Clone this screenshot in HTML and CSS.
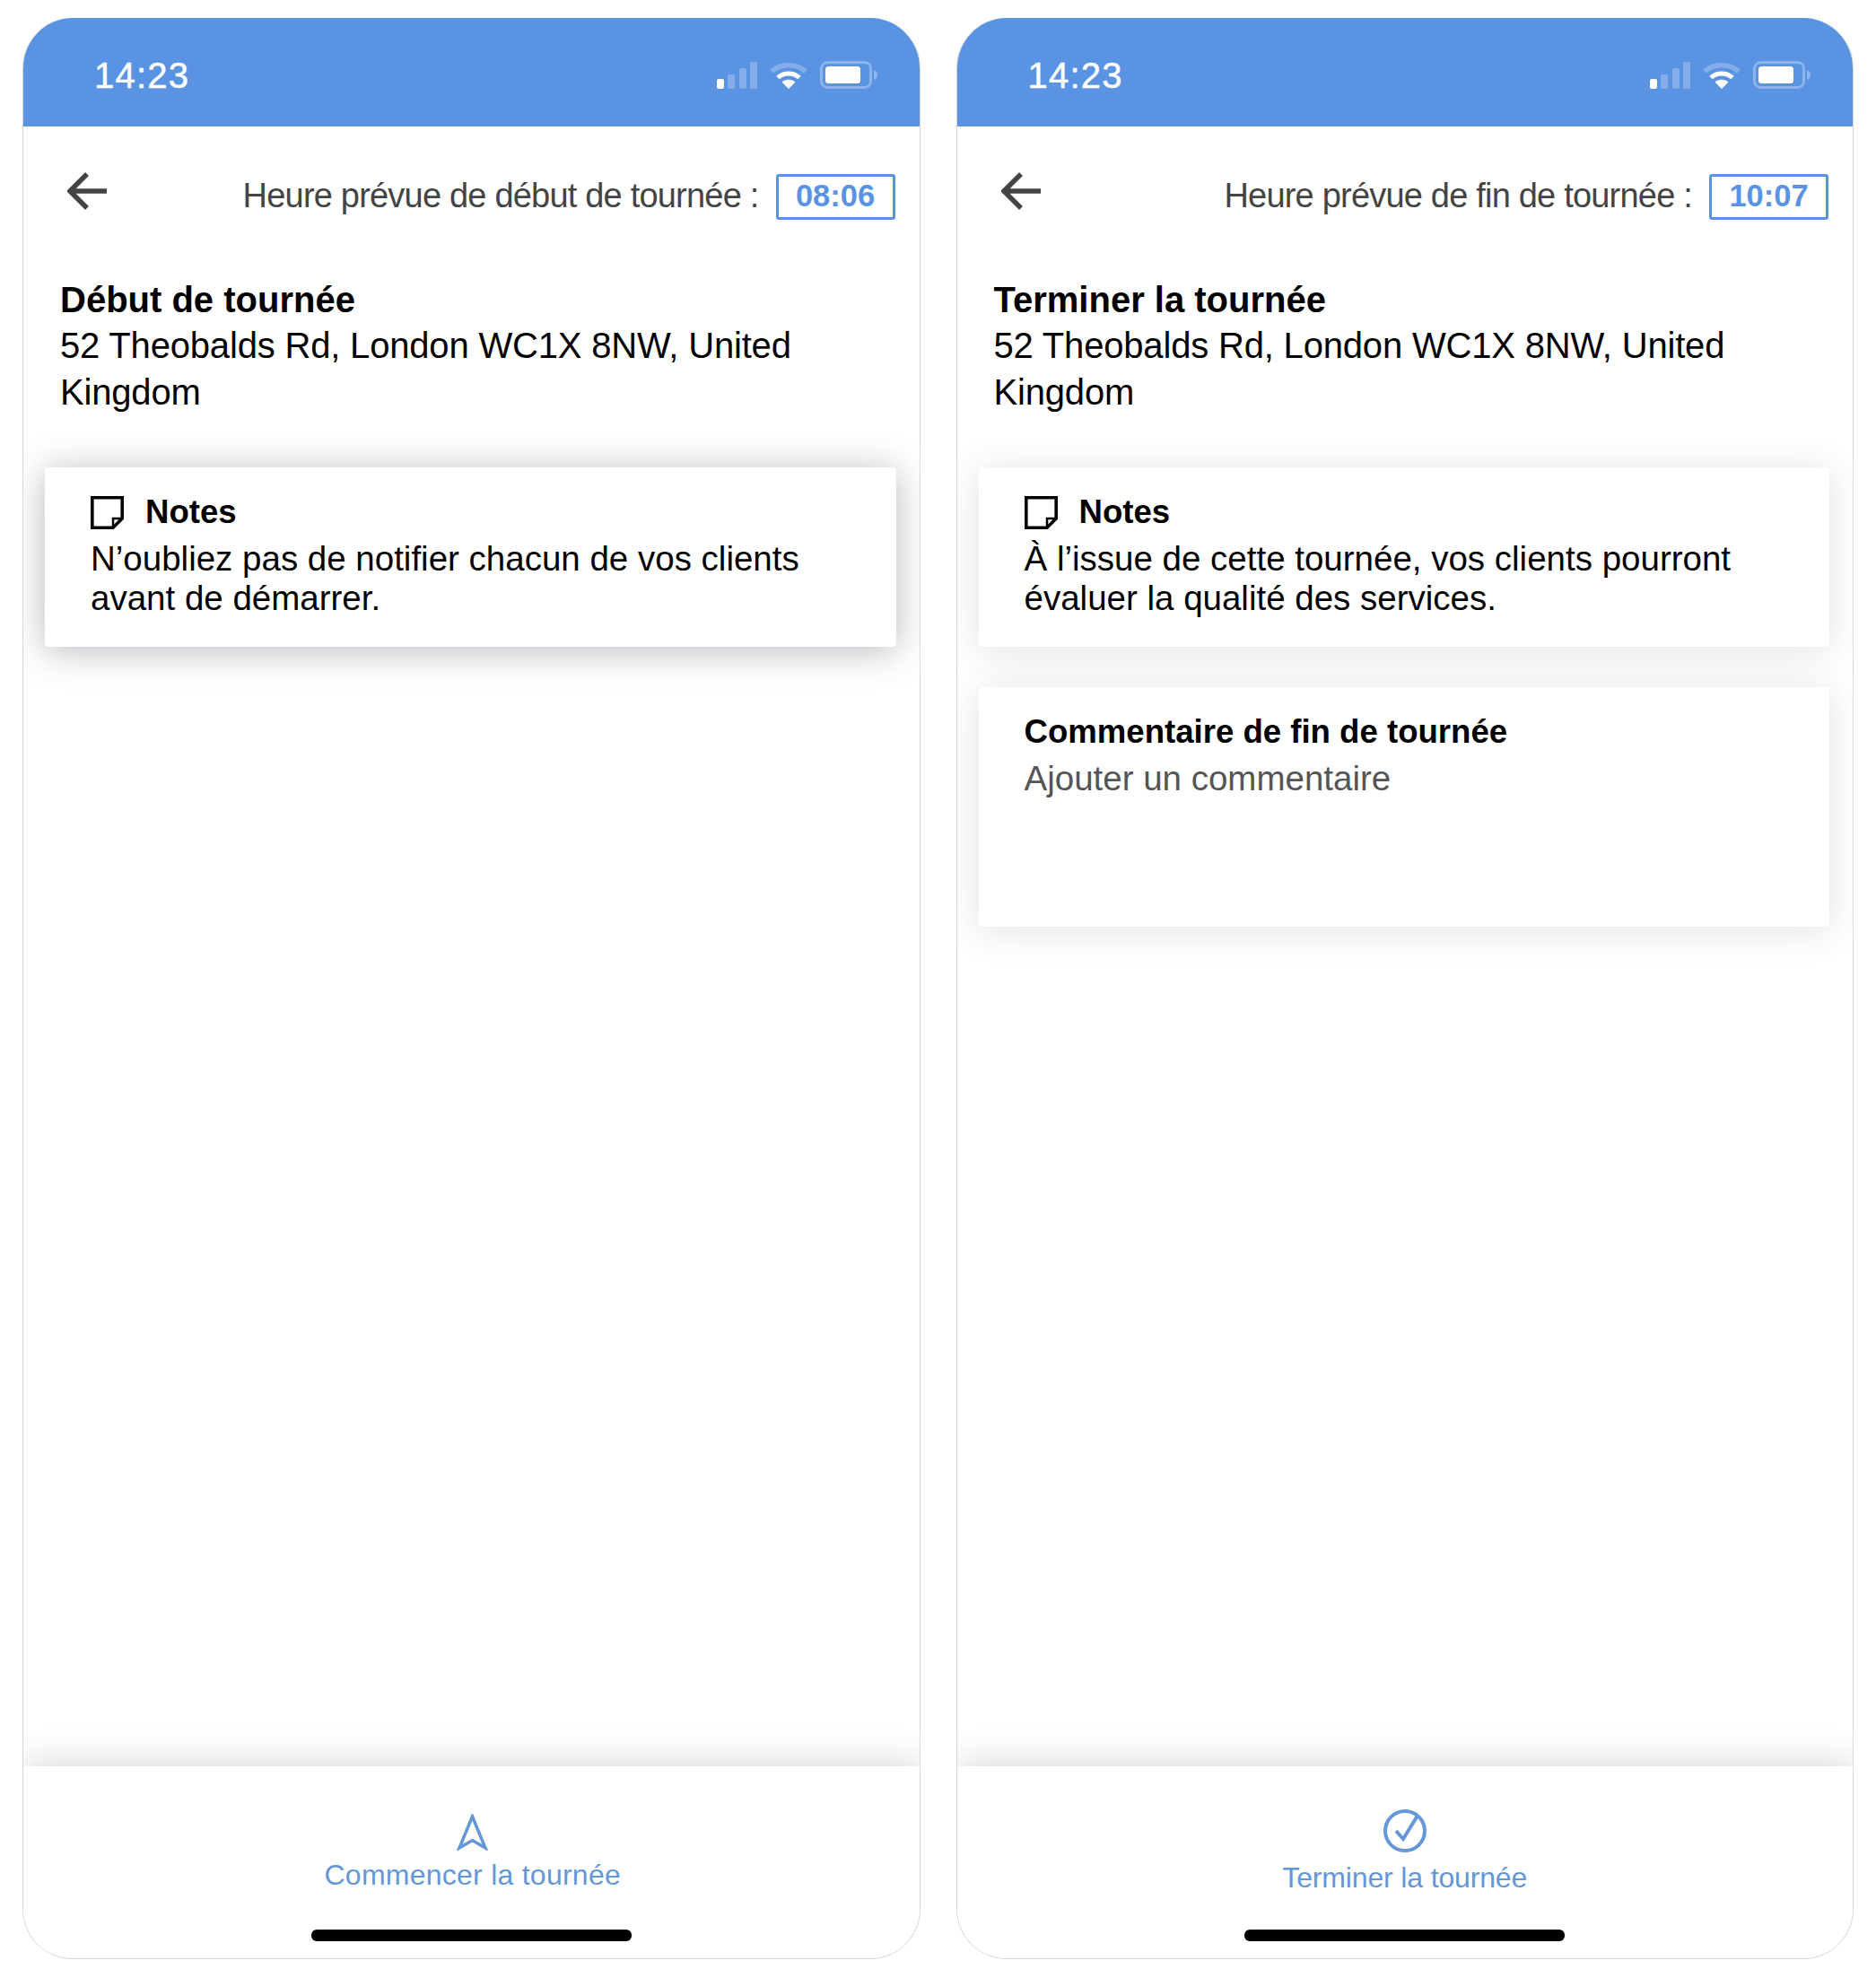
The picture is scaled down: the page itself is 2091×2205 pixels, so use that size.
FILE: index.html
```html
<!DOCTYPE html>
<html lang="fr">
<head>
    <meta charset="UTF-8">
    <title>Tournée</title>
    <link rel="stylesheet" href="styles.css">
</head>
<body>

<div class="screens">

    <!-- debut de tournee -->
    <div class="phone">
        <div class="status-bar">
            <span class="clock">14:23</span>
            <div class="status-icons">
                <svg class="signal" width="45" height="30" viewBox="0 0 45 30"><rect x="0" y="19" width="8" height="11" rx="2" fill="#fff"/><rect x="12" y="14" width="8" height="16" rx="2" fill="#fff" opacity=".25"/><rect x="25" y="7" width="8" height="23" rx="2" fill="#fff" opacity=".25"/><rect x="37" y="0" width="8" height="30" rx="2" fill="#fff" opacity=".25"/></svg>
                <svg class="wifi" width="42" height="30" viewBox="0 0 42 30"><path d="M2 10.5C12.500 1.500 29.500 1.500 40 10.500" fill="none" stroke="#fff" stroke-opacity=".25" stroke-width="5.500"/><path d="M9 17.500C15.500 11.500 26.500 11.500 33 17.500" fill="none" stroke="#fff" stroke-width="5"/><path d="M21 30L13.500 22.500C17.500 18.800 24.500 18.800 28.500 22.500Z" fill="#fff"/></svg>
                <svg class="battery" width="65" height="31" viewBox="0 0 65 31"><rect x="1.500" y="1.500" width="55" height="28" rx="7" fill="none" stroke="#fff" stroke-opacity=".3" stroke-width="3"/><rect x="6" y="6" width="39" height="19" rx="3.500" fill="#fff"/><path d="M60 10C63 11 64 13 64 15.500C64 18 63 20 60 21Z" fill="#fff" opacity=".3"/></svg>
            </div>
        </div>

        <div class="top-row">
            <svg class="back" width="44" height="42" viewBox="0 0 44 42"><path d="M44 21H4M22 2L3 21L22 40" fill="none" stroke="#444" stroke-width="5.500"/></svg>
            <span class="planned">Heure prévue de début de tournée :</span>
            <span class="time-box">08:06</span>
        </div>

        <div class="place">
            <h2>Début de tournée</h2>
            <p>52 Theobalds Rd, London WC1X 8NW, United Kingdom</p>
        </div>

        <div class="card card-strong">
            <div class="card-title">
                <svg class="note-icon" width="37" height="37" viewBox="0 0 37 37"><path d="M1.800 1.800H35.200V25L25 35.200H1.800Z" fill="none" stroke="#000" stroke-width="3.600"/><path d="M35 25H25V35" fill="none" stroke="#000" stroke-width="2.500"/></svg>
                <span>Notes</span>
            </div>
            <p>N’oubliez pas de notifier chacun de vos clients avant de démarrer.</p>
        </div>

        <div class="footer">
            <div class="footer-btn footer-btn-start">
                <svg class="nav-icon" width="35" height="41" viewBox="0 0 35 41"><path d="M17.500 3L32 38L17.500 29.500L3 38Z" fill="none" stroke="#6497d8" stroke-width="3.500"/></svg>
                <span class="footer-label">Commencer la tournée</span>
            </div>
            <div class="home-bar"></div>
        </div>
    </div>

    <!-- fin de tournee -->
    <div class="phone">
        <div class="status-bar">
            <span class="clock">14:23</span>
            <div class="status-icons">
                <svg class="signal" width="45" height="30" viewBox="0 0 45 30"><rect x="0" y="19" width="8" height="11" rx="2" fill="#fff"/><rect x="12" y="14" width="8" height="16" rx="2" fill="#fff" opacity=".25"/><rect x="25" y="7" width="8" height="23" rx="2" fill="#fff" opacity=".25"/><rect x="37" y="0" width="8" height="30" rx="2" fill="#fff" opacity=".25"/></svg>
                <svg class="wifi" width="42" height="30" viewBox="0 0 42 30"><path d="M2 10.5C12.500 1.500 29.500 1.500 40 10.500" fill="none" stroke="#fff" stroke-opacity=".25" stroke-width="5.500"/><path d="M9 17.500C15.500 11.500 26.500 11.500 33 17.500" fill="none" stroke="#fff" stroke-width="5"/><path d="M21 30L13.500 22.500C17.500 18.800 24.500 18.800 28.500 22.500Z" fill="#fff"/></svg>
                <svg class="battery" width="65" height="31" viewBox="0 0 65 31"><rect x="1.500" y="1.500" width="55" height="28" rx="7" fill="none" stroke="#fff" stroke-opacity=".3" stroke-width="3"/><rect x="6" y="6" width="39" height="19" rx="3.500" fill="#fff"/><path d="M60 10C63 11 64 13 64 15.500C64 18 63 20 60 21Z" fill="#fff" opacity=".3"/></svg>
            </div>
        </div>

        <div class="top-row">
            <svg class="back" width="44" height="42" viewBox="0 0 44 42"><path d="M44 21H4M22 2L3 21L22 40" fill="none" stroke="#444" stroke-width="5.500"/></svg>
            <span class="planned">Heure prévue de fin de tournée :</span>
            <span class="time-box">10:07</span>
        </div>

        <div class="place">
            <h2>Terminer la tournée</h2>
            <p>52 Theobalds Rd, London WC1X 8NW, United Kingdom</p>
        </div>

        <div class="card">
            <div class="card-title">
                <svg class="note-icon" width="37" height="37" viewBox="0 0 37 37"><path d="M1.800 1.800H35.200V25L25 35.200H1.800Z" fill="none" stroke="#000" stroke-width="3.600"/><path d="M35 25H25V35" fill="none" stroke="#000" stroke-width="2.500"/></svg>
                <span>Notes</span>
            </div>
            <p>À l’issue de cette tournée, vos clients pourront évaluer la qualité des services.</p>
        </div>

        <div class="card comment-card">
            <div class="card-title">Commentaire de fin de tournée</div>
            <p class="placeholder">Ajouter un commentaire</p>
        </div>

        <div class="footer">
            <div class="footer-btn footer-btn-done">
                <svg class="check-icon" width="48" height="48" viewBox="0 0 48 48"><circle cx="24" cy="24" r="22" fill="none" stroke="#6497d8" stroke-width="4"/><path d="M14 24L22 33L38 7" fill="none" stroke="#6497d8" stroke-width="4"/></svg>
                <span class="footer-label">Terminer la tournée</span>
            </div>
            <div class="home-bar"></div>
        </div>
    </div>

</div>

</body>
</html>
```

FILE: styles.css
```css
body {
    margin: 0;
    padding: 0;
    background-color: #fff;
    font-family: "Liberation Sans", Arial, sans-serif;
    color: #000;
}

.screens {
    display: flex;
    gap: 40px;
    padding: 20px 25px 0;
}

.phone {
    display: flex;
    flex-direction: column;
    box-sizing: border-box;
    width: 1001px;
    height: 2164px;
    border: 1px solid #d6d6d8;
    border-top: none;
    border-radius: 56px;
    overflow: hidden;
}

.status-bar {
    display: flex;
    align-items: center;
    justify-content: space-between;
    height: 121px;
    margin: 0 -1px;
    padding: 6px 47px 0 80px;
    box-sizing: border-box;
    background-color: #5b93e3;
    color: #fff;
    flex-shrink: 0;
}

.clock {
    padding-top: 1px;
    font-size: 40px;
    letter-spacing: 1.200px;
    -webkit-text-stroke: 0.5px #fff;
}

.status-icons {
    display: flex;
    align-items: center;
    gap: 14px;
}

.top-row {
    display: flex;
    align-items: center;
    height: 51px;
    margin-top: 53px;
    padding: 0 27px 0 49px;
}

.back {
    margin-top: -13px;
}

.planned {
    margin-left: auto;
    margin-top: -2px;
    font-size: 38px;
    letter-spacing: -0.800px;
    color: #444;
}

.time-box {
    box-sizing: border-box;
    width: 133px;
    height: 51px;
    margin-left: 19px;
    border: 3px solid #5b93e3;
    border-radius: 3px;
    color: #5b93e3;
    font-size: 34.500px;
    font-weight: bold;
    line-height: 43px;
    text-align: center;
}

.place {
    margin-top: 63px;
    padding: 0 40px 0 41px;
}

.place h2 {
    margin: 0;
    font-size: 40px;
    line-height: 52px;
}

.place p {
    margin: 0;
    font-size: 40px;
    letter-spacing: -0.180px;
    line-height: 51.500px;
}

.card {
    height: 172px;
    margin: 58px 26px 0 24px;
    padding: 28px 36px 0 51px;
    background-color: #fff;
    border-radius: 4px;
    box-shadow: 0 4px 40px rgba(70, 70, 90, 0.16);
    flex-shrink: 0;
}

.card-strong {
    box-shadow: 0 4px 40px rgba(60, 60, 80, 0.36);
}

.comment-card {
    margin-top: 45px;
    height: 239px;
}

.card-title {
    display: flex;
    align-items: center;
    gap: 24px;
    height: 44px;
    font-size: 36.600px;
    font-weight: bold;
}

.card p {
    margin: 8px 0 0;
    font-size: 38.500px;
    line-height: 44px;
}

.card .placeholder {
    color: #555;
}

.footer {
    display: flex;
    flex-direction: column;
    align-items: center;
    height: 214px;
    margin: auto -1px 0;
    background-color: #fff;
    box-shadow: 0 -6px 36px rgba(60, 60, 80, 0.18);
    flex-shrink: 0;
}

.footer-btn {
    display: flex;
    flex-direction: column;
    align-items: center;
    height: 182px;
    padding-top: 53px;
    box-sizing: border-box;
}

.footer-btn-start {
    padding-left: 3px;
}

.footer-btn-start .footer-label {
    letter-spacing: 0.250px;
}

.footer-btn-done {
    padding-top: 48px;
}

.footer-btn-done .footer-label {
    margin-top: 10px;
    letter-spacing: -0.150px;
}

.footer-label {
    margin-top: 9px;
    font-size: 32px;
    line-height: 36px;
    color: #6497d8;
}

.home-bar {
    width: 357px;
    height: 13px;
    border-radius: 6px;
    background-color: #000;
}
```
